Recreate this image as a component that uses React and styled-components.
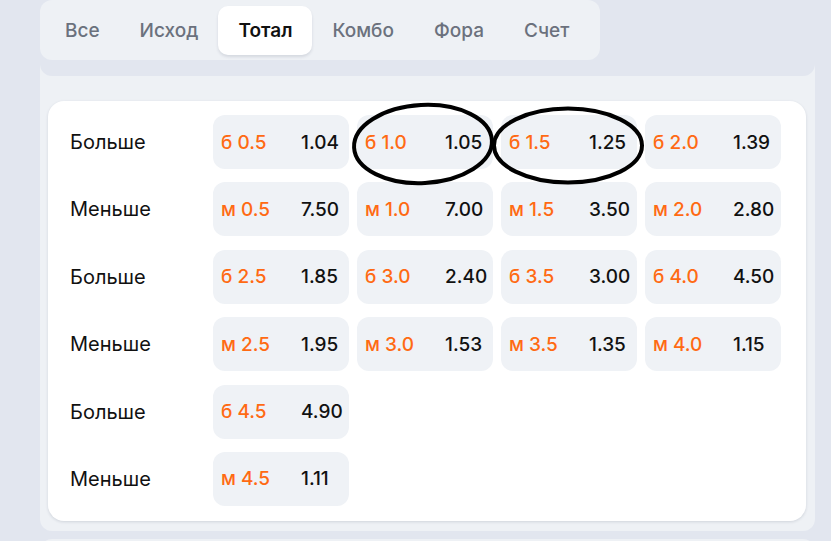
import React, { useState } from 'react';
import styled, { createGlobalStyle } from 'styled-components';

const GlobalStyle = createGlobalStyle`
  html, body {
    margin: 0;
    padding: 0;
    background: #e2e6ef;
    font-family: Inter, Roboto, "Liberation Sans", Arial, sans-serif;
  }
`

const Page = styled.div`
  position: relative;
  width: 831px;
  height: 541px;
  overflow: hidden;
`

const Panel = styled.div`
  margin-left: 40px;
  width: 775px;
  background: #eef1f5;
  border-radius: 0 0 12px 12px;
  padding-bottom: 10px;
`

const Header = styled.div`
  background: #e2e6ef;
  padding-bottom: 16px;
  border-radius: 0 0 12px 12px;
`

const TabBar = styled.div`
  display: flex;
  align-items: center;
  width: 560px;
  height: 60px;
  box-sizing: border-box;
  padding: 0 5px;
  background: #eef1f5;
  border-radius: 12px;
`

const Tab = styled.div`
  height: 49px;
  display: flex;
  align-items: center;
  padding: 0 20px;
  border-radius: 10px;
  font-size: 19px;
  font-weight: ${p => (p.$active ? 600 : 500)};
  color: ${p => (p.$active ? '#111' : '#6b717d')};
  background: ${p => (p.$active ? '#fff' : 'transparent')};
  box-shadow: ${p => (p.$active ? '0 2px 3px rgba(30, 40, 70, 0.12)' : 'none')};
  cursor: pointer;
`

const Card = styled.div`
  margin: 25px 9px 0 8px;
  background: #fff;
  border-radius: 16px;
  padding: 14px 26px 15px 22px;
  box-shadow: 0 1px 3px rgba(30, 40, 70, 0.14);
  display: flex;
  flex-direction: column;
  gap: 13.4px;
`

const Row = styled.div`
  display: grid;
  grid-template-columns: 135px repeat(4, 136px);
  column-gap: 8px;
  height: 54px;
  align-items: center;
`

const Label = styled.div`
  font-size: 20px;
  color: #111;
`

const Cell = styled.div`
  height: 54px;
  box-sizing: border-box;
  display: grid;
  grid-template-columns: 80px auto;
  align-items: center;
  padding: 0 8px;
  background: #eff2f6;
  border-radius: 12px;
  font-size: 19px;
  font-weight: 500;
`

const Line = styled.span`
  color: #ff6a13;
`

const Odd = styled.span`
  color: #111;
`

const NextPanel = styled.div`
  margin: 8px 0 0 40px;
  width: 775px;
  height: 20px;
  background: #eef1f5;
  border-radius: 12px 12px 0 0;
`

const Marks = styled.svg`
  position: absolute;
  left: 0;
  top: 0;
  pointer-events: none;
`

const tabs = ['Все', 'Исход', 'Тотал', 'Комбо', 'Фора', 'Счет']

const rows = [
  { label: 'Больше', items: [['б 0.5', '1.04'], ['б 1.0', '1.05'], ['б 1.5', '1.25'], ['б 2.0', '1.39']] },
  { label: 'Меньше', items: [['м 0.5', '7.50'], ['м 1.0', '7.00'], ['м 1.5', '3.50'], ['м 2.0', '2.80']] },
  { label: 'Больше', items: [['б 2.5', '1.85'], ['б 3.0', '2.40'], ['б 3.5', '3.00'], ['б 4.0', '4.50']] },
  { label: 'Меньше', items: [['м 2.5', '1.95'], ['м 3.0', '1.53'], ['м 3.5', '1.35'], ['м 4.0', '1.15']] },
  { label: 'Больше', items: [['б 4.5', '4.90']] },
  { label: 'Меньше', items: [['м 4.5', '1.11']] },
]

export default function App() {
  const [active, setActive] = useState('Тотал')

  return (
    <Page>
      <GlobalStyle />
      <Panel>
        <Header>
          <TabBar>
            {tabs.map(t => (
              <Tab key={t} $active={t === active} onClick={() => setActive(t)}>{t}</Tab>
            ))}
          </TabBar>
        </Header>
        <Card>
          {rows.map((row, i) => (
            <Row key={i}>
              <Label>{row.label}</Label>
              {row.items.map(([line, odd]) => (
                <Cell key={line}>
                  <Line>{line}</Line>
                  <Odd>{odd}</Odd>
                </Cell>
              ))}
            </Row>
          ))}
        </Card>
      </Panel>
      <NextPanel />
      {/* hand-drawn annotation circles */}
      <Marks width="831" height="541" viewBox="0 0 831 541">
        <ellipse cx="423" cy="144" rx="69" ry="39" fill="none" stroke="#000" strokeWidth="4" transform="rotate(-3 423 144)" />
        <ellipse cx="568" cy="145.5" rx="74" ry="37" fill="none" stroke="#000" strokeWidth="4" />
      </Marks>
    </Page>
  )
}
